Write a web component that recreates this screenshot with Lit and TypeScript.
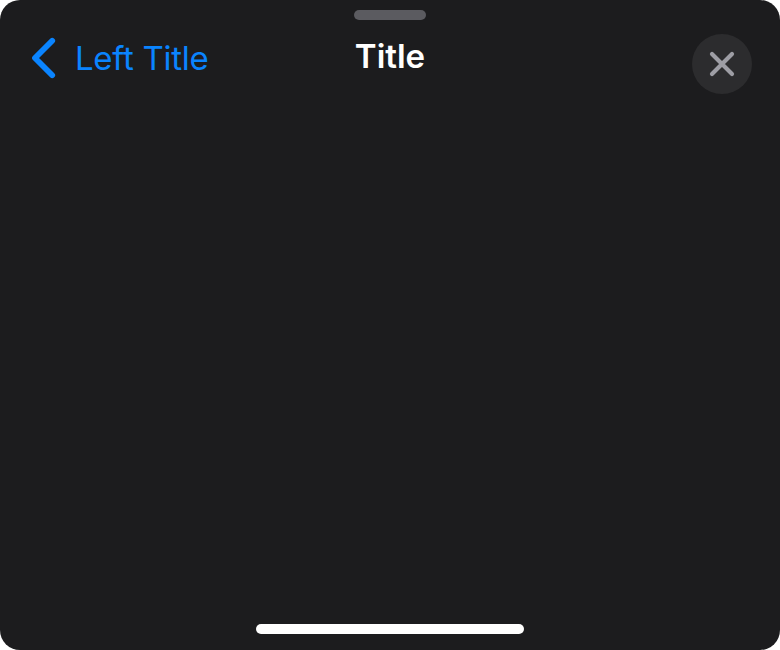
import { LitElement, html, css } from "lit";
import { customElement } from "lit/decorators.js";

@customElement("app-root")
class AppRoot extends LitElement {
  static styles = css`
    :host { display: block; background: #fff; font-family: Inter, "Liberation Sans", sans-serif; }
    .sheet { box-sizing: border-box; height: 650px; width: 780px; background: #1c1c1e; border-radius: 20px; display: flex; flex-direction: column; align-items: center; padding: 10px 0 16px; }
    .grabber { width: 72px; height: 10px; border-radius: 5px; background: #5b5b60; flex: none; }
    .bar { width: 100%; box-sizing: border-box; display: grid; grid-template-columns: 1fr auto 1fr; align-items: start; padding: 14px 28px 0; }
    .back { display: flex; align-items: flex-start; color: #0a84ff; padding: 3px 0 0 3px; gap: 19px; white-space: nowrap; }
    .label { font-size: 33px; line-height: 42px; letter-spacing: -0.3px; }
    .title { color: #fff; font-size: 33px; font-weight: 600; line-height: 42px; padding-top: 1px; }
    .close { justify-self: end; width: 60px; height: 60px; border-radius: 50%; background: #2c2c2e; display: grid; place-items: center; }
    svg { display: block; }
    .body { flex: 1; }
    .home { width: 268px; height: 10px; border-radius: 5px; background: #fff; }
  `;
  render() {
    return html`<div class="sheet">
      <div class="grabber"></div>
      <div class="bar">
        <div class="back">
          <svg width="25" height="42" viewBox="0 0 25 42"><path d="M21.2 3.8 4 21 21.2 38.2" fill="none" stroke="#0a84ff" stroke-width="5.8" stroke-linecap="round" stroke-linejoin="round"/></svg>
          <span class="label">Left Title</span>
        </div>
        <div class="title">Title</div>
        <div class="close">
          <svg width="28" height="28" viewBox="0 0 28 28"><path d="M4 4 24 24M24 4 4 24" stroke="#9e9ea5" stroke-width="4.2" stroke-linecap="round"/></svg>
        </div>
      </div>
      <div class="body"></div>
      <div class="home"></div>
    </div>`;
  }
}
